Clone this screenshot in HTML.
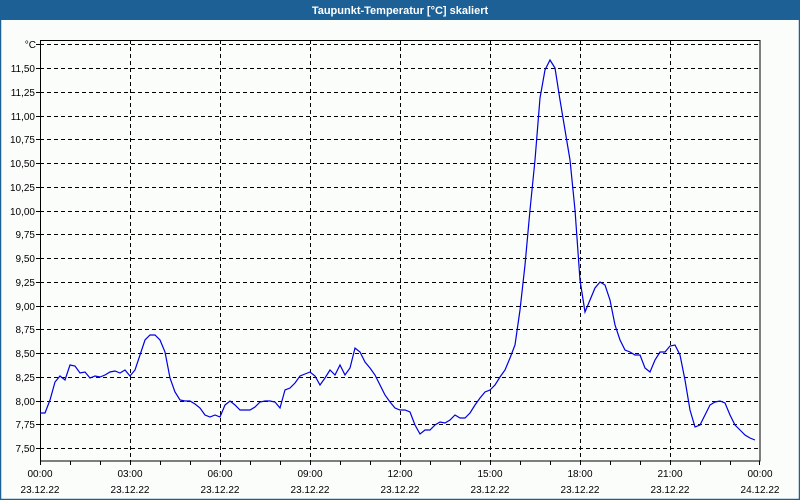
<!DOCTYPE html>
<html><head><style>
html,body{margin:0;padding:0;width:800px;height:500px;overflow:hidden;background:#fbfdfb;font-family:"Liberation Sans",sans-serif;}
</style></head><body>
<svg width="800" height="500" xmlns="http://www.w3.org/2000/svg" font-family="Liberation Sans, sans-serif" font-size="10">
<rect x="0" y="0" width="800" height="500" fill="#fbfdfb"/>
<rect x="0.5" y="0.5" width="799" height="499" fill="none" stroke="#1d6096" stroke-width="1.5"/>
<rect x="0" y="0" width="800" height="20" fill="#1d6096"/>
<text x="400" y="14" fill="#fff" font-weight="bold" font-size="11" text-anchor="middle">Taupunkt-Temperatur [°C] skaliert</text>
<g stroke="#000" stroke-dasharray="4,3" stroke-width="1">
<line x1="40" y1="44.5" x2="760" y2="44.5"/>
<line x1="40" y1="68.5" x2="760" y2="68.5"/>
<line x1="40" y1="92.5" x2="760" y2="92.5"/>
<line x1="40" y1="116.5" x2="760" y2="116.5"/>
<line x1="40" y1="139.5" x2="760" y2="139.5"/>
<line x1="40" y1="163.5" x2="760" y2="163.5"/>
<line x1="40" y1="187.5" x2="760" y2="187.5"/>
<line x1="40" y1="211.5" x2="760" y2="211.5"/>
<line x1="40" y1="234.5" x2="760" y2="234.5"/>
<line x1="40" y1="258.5" x2="760" y2="258.5"/>
<line x1="40" y1="282.5" x2="760" y2="282.5"/>
<line x1="40" y1="306.5" x2="760" y2="306.5"/>
<line x1="40" y1="329.5" x2="760" y2="329.5"/>
<line x1="40" y1="353.5" x2="760" y2="353.5"/>
<line x1="40" y1="377.5" x2="760" y2="377.5"/>
<line x1="40" y1="401.5" x2="760" y2="401.5"/>
<line x1="40" y1="424.5" x2="760" y2="424.5"/>
<line x1="40" y1="448.5" x2="760" y2="448.5"/>
<line x1="130.5" y1="40" x2="130.5" y2="461"/>
<line x1="220.5" y1="40" x2="220.5" y2="461"/>
<line x1="310.5" y1="40" x2="310.5" y2="461"/>
<line x1="400.5" y1="40" x2="400.5" y2="461"/>
<line x1="490.5" y1="40" x2="490.5" y2="461"/>
<line x1="580.5" y1="40" x2="580.5" y2="461"/>
<line x1="670.5" y1="40" x2="670.5" y2="461"/>
</g>
<rect x="40.5" y="40.5" width="719.5" height="420.5" fill="none" stroke="#000" stroke-width="1"/>
<g stroke="#000">
<path d="M40.5 461v4M70.5 461v4M100.5 461v4M130.5 461v4M160.5 461v4M190.5 461v4M220.5 461v4M250.5 461v4M280.5 461v4M310.5 461v4M340.5 461v4M370.5 461v4M400.5 461v4M430.5 461v4M460.5 461v4M490.5 461v4M520.5 461v4M550.5 461v4M580.5 461v4M610.5 461v4M640.5 461v4M670.5 461v4M700.5 461v4M730.5 461v4M759.5 461v4"/>
<path d="M36 68.5h4M36 92.5h4M36 116.5h4M36 139.5h4M36 163.5h4M36 187.5h4M36 211.5h4M36 234.5h4M36 258.5h4M36 282.5h4M36 306.5h4M36 329.5h4M36 353.5h4M36 377.5h4M36 401.5h4M36 424.5h4M36 448.5h4M36 44.5h4"/>
</g>
<g fill="#000" text-anchor="end">
<text x="36" y="48">°C</text>
<text x="35" y="72">11,50</text><text x="35" y="96">11,25</text><text x="35" y="120">11,00</text><text x="35" y="143">10,75</text>
<text x="35" y="167">10,50</text><text x="35" y="191">10,25</text><text x="35" y="215">10,00</text><text x="35" y="238">9,75</text>
<text x="35" y="262">9,50</text><text x="35" y="286">9,25</text><text x="35" y="310">9,00</text><text x="35" y="333">8,75</text>
<text x="35" y="357">8,50</text><text x="35" y="381">8,25</text><text x="35" y="405">8,00</text><text x="35" y="428">7,75</text>
<text x="35" y="452">7,50</text>
</g>
<g fill="#000" text-anchor="middle">
<text x="40" y="477">00:00</text><text x="130" y="477">03:00</text><text x="220" y="477">06:00</text><text x="310" y="477">09:00</text><text x="400" y="477">12:00</text><text x="490" y="477">15:00</text><text x="580" y="477">18:00</text><text x="670" y="477">21:00</text><text x="760" y="477">00:00</text>
<text x="40" y="493">23.12.22</text><text x="130" y="493">23.12.22</text><text x="220" y="493">23.12.22</text><text x="310" y="493">23.12.22</text><text x="400" y="493">23.12.22</text><text x="490" y="493">23.12.22</text><text x="580" y="493">23.12.22</text><text x="670" y="493">23.12.22</text><text x="760" y="493">24.12.22</text>
</g>
<polyline fill="none" stroke="#0000e0" stroke-width="1.2" points="40,413 45,413 50,400 55,382 60,376 65,380 70,365 75,366 80,373 85,372 90,378 95,376 100,377 105,375 110,372 115,371 120,373 125,370 130,376 135,370 140,355 145,340 150,335 155,335 160,340 165,352 170,378 175,392 180,400 185,401 190,401 195,404 200,408 205,415 210,417 215,415 220,417 225,405 230,401 235,405 240,410 245,410 250,410 255,407 260,402 265,401 270,401 275,402 280,408 285,390 290,388 295,383 300,376 305,374 310,372 315,376 320,385 325,378 330,370 335,375 340,365 345,375 350,368 355,348 360,352 365,362 370,368 375,375 380,385 385,395 390,402 395,408 400,410 405,410 410,412 415,425 420,434 425,430 430,430 435,425 440,422 445,423 450,420 455,415 460,418 465,418 470,413 475,405 480,398 485,392 490,390 495,385 500,377 505,370 510,358 515,345 520,310 525,265 530,210 535,160 540,98 545,70 550,60 555,68 560,100 565,130 570,160 575,210 580,280 585,312 590,300 595,288 600,282 605,285 610,300 615,325 620,340 625,350 630,352 635,355 640,355 645,368 650,372 655,360 660,352 665,352 670,346 675,345 680,355 685,380 690,410 695,427 700,425 705,415 710,405 715,402 720,401 725,403 730,415 735,425 740,430 745,435 750,438 755,440"/>
</svg>
</body></html>
